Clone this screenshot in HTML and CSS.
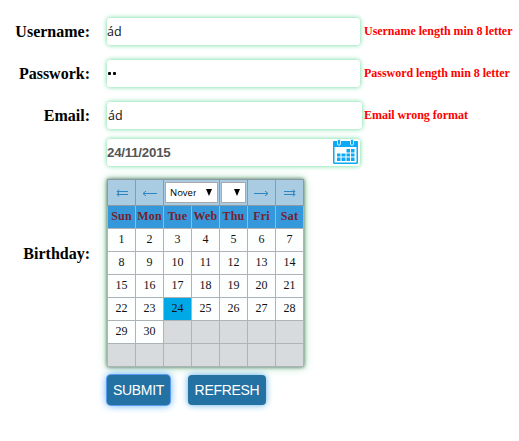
FILE: index.html
```
<!DOCTYPE html>
<html lang="en">
<head>
<meta charset="utf-8">
<title>Register</title>
<link rel="stylesheet" href="styles.css">
</head>
<body>
<form class="form">
  <div class="row">
    <div class="label">Username:</div>
    <div class="field">ád</div>
    <span class="error">Username length min 8 letter</span>
  </div>
  <div class="row">
    <div class="label">Passwork:</div>
    <div class="field password"><i></i><i></i></div>
    <span class="error">Password length min 8 letter</span>
  </div>
  <div class="row">
    <div class="label">Email:</div>
    <div class="field email">ád</div>
    <span class="error email-error">Email wrong format</span>
  </div>
  <div class="row birthday">
    <div class="label">Birthday:</div>
    <div class="picker">
      <div class="field date"><span>24/11/2015</span>
        <svg class="cal-icon" viewBox="0 0 25 25" width="25" height="25">
          <path fill="#0aaaf5" fill-rule="evenodd" d="M1 2H24Q25 2 25 3V23.500Q25 25 23.500 25H1.500Q0 25 0 23.500V3Q0 2 1 2ZM1.500 8V23.500H23.500V8Z"/>
          <path fill="#0aaaf5" stroke="#d8f1fe" d="M4.500 .5h3v5q-1.500 1.500-3 0ZM17.500 .5h3v5q-1.500 1.500-3 0Z"/>
          <path fill="#0aaaf5" d="M13.500 10h3.500v3.500h-3.500zM18 10h3.500v3.500h-3.500zM4 14.500h3.500v3h-3.500zM8.500 14.500h4v3h-4zM13.500 14.500h3.500v3h-3.500zM18 14.500h3.500v3h-3.500zM4 18.500h3.500v3.500h-3.500zM8.500 18.500h4v3.500h-4zM13.500 18.500h3.500v3.500h-3.500zM18 18.500h3.500v3.500h-3.500z"/>
        </svg>
      </div>
      <div class="calendar">
        <div class="nav"><svg width="12" height="8" viewBox="0 0 12 8"><path d="M1 2.500H12M3 .5L1 2.500L3 4M1 5.500H12M3 4L1 5.500L3 7.500"/></svg></div>
        <div class="nav"><svg width="15" height="10" viewBox="0 0 15 10"><path d="M1 5.500H15M4 3L1 5.500L4 8"/></svg></div>
        <div class="nav month"><div class="select"><span>Nover</span><b></b></div></div>
        <div class="nav"><div class="select year"><b></b></div></div>
        <div class="nav"><svg width="15" height="10" viewBox="0 0 15 10"><path d="M0 5.500H14M11 3L14 5.500L11 8"/></svg></div>
        <div class="nav"><svg width="12" height="8" viewBox="0 0 12 8"><path d="M0 2.500H11M9 .5L11 2.500L9 4M0 5.500H11M9 4L11 5.500L9 7.500"/></svg></div>
        <div class="dow">Sun</div><div class="dow">Mon</div><div class="dow">Tue</div><div class="dow">Web</div><div class="dow">Thu</div><div class="dow">Fri</div><div class="dow">Sat</div>
        <div class="day">1</div><div class="day">2</div><div class="day">3</div><div class="day">4</div><div class="day">5</div><div class="day">6</div><div class="day">7</div>
        <div class="day">8</div><div class="day">9</div><div class="day">10</div><div class="day">11</div><div class="day">12</div><div class="day">13</div><div class="day">14</div>
        <div class="day">15</div><div class="day">16</div><div class="day">17</div><div class="day">18</div><div class="day">19</div><div class="day">20</div><div class="day">21</div>
        <div class="day">22</div><div class="day">23</div><div class="day selected">24</div><div class="day">25</div><div class="day">26</div><div class="day">27</div><div class="day">28</div>
        <div class="day">29</div><div class="day">30</div><div class="day empty"></div><div class="day empty"></div><div class="day empty"></div><div class="day empty"></div><div class="day empty"></div>
        <div class="day empty"></div><div class="day empty"></div><div class="day empty"></div><div class="day empty"></div><div class="day empty"></div><div class="day empty"></div><div class="day empty"></div>
      </div>
    </div>
  </div>
  <div class="actions">
    <button type="button" class="btn submit">SUBMIT</button>
    <button type="button" class="btn refresh">REFRESH</button>
  </div>
</form>
</body>
</html>
```
FILE: styles.css
```
* { box-sizing: border-box; }
body {
  margin: 0;
  background: #fff;
  font-family: "Liberation Serif", serif;
}
.form { padding: 18px 0; }
.row {
  display: flex;
  align-items: center;
  height: 27px;
  margin-bottom: 15px;
}
.label {
  width: 90px;
  margin-right: 17px;
  text-align: right;
  font-size: 16px;
  font-weight: bold;
  line-height: 27px;
}
.field {
  display: flex;
  align-items: center;
  width: 253px;
  height: 27px;
  padding-bottom: 1px;
  border-radius: 3px;
  background: #fff;
  box-shadow: 0 0 5px #5fd694;
  font: 12.5px "Open Sans", sans-serif;
  color: #111;
}
.password { gap: 2px; padding: 0 0 0 1px; }
.password i { width: 3px; height: 3px; border-radius: 1px; background: #000; }
.email { width: 255px; padding-left: 1px; }
.error {
  margin-left: 4px;
  color: #f00;
  font-size: 12px;
  font-weight: bold;
  letter-spacing: -0.03px;
  white-space: nowrap;
}
.email-error { margin-left: 2px; }
.birthday {
  height: 228px;
  margin: -5px 0 8px;
}
.picker { align-self: flex-start; }
.date {
  justify-content: space-between;
  padding: 0 2px 0 0;
  margin-bottom: 13px;
  font: bold 13.33px "Liberation Sans", sans-serif;
  letter-spacing: -0.25px;
  color: #555;
}
.cal-icon { margin-top: -2px; }
.calendar {
  display: grid;
  grid-template-columns: repeat(7, 27px);
  grid-template-rows: 25px repeat(7, 22px);
  gap: 1px;
  width: 197px;
  padding: 1px;
  background: #adb4b7;
  box-shadow: 0 0 4px #456b50, 0 0 10px #b4e8c8;
}
.nav {
  display: flex;
  align-items: center;
  justify-content: center;
  background: #a9cce3;
  box-shadow: 0 0 0 1px #8c9ba3;
}
.nav svg { fill: none; stroke: #2e86c1; stroke-width: 1; }
.month { grid-column: span 2; }
.select {
  display: flex;
  align-items: center;
  justify-content: space-between;
  width: 53px;
  height: 21px;
  padding: 0 5px 0 4px;
  border: 1px solid #a9a9a9;
  background: #fff;
  font: 9.5px "Open Sans", sans-serif;
}
.select span { width: 26px; overflow: hidden; }
.select b {
  flex: none;
  border: 3.5px solid transparent;
  border-width: 7px 3.5px 0;
  border-top-color: #000;
}
.year { width: 25px; justify-content: flex-end; }
.dow {
  background: #3498db;
  color: #78202e;
  text-align: center;
  font-size: 12px;
  font-weight: bold;
  letter-spacing: 0.2px;
  line-height: 21px;
}
.day {
  background: #fdfefe;
  color: #111;
  text-align: center;
  font-size: 12px;
  line-height: 21px;
}
.empty { background: #d7dbdd; }
.selected { background: #00a9e6; }
.actions { display: flex; gap: 18px; padding-left: 107px; }
.btn {
  height: 30px;
  padding: 0;
  border: 0;
  border-radius: 4px;
  background: #2471a3;
  box-shadow: 0 0 7px #5dade2;
  color: #fff;
  font: 14px "Liberation Sans", sans-serif;
  letter-spacing: -0.3px;
}
.submit { width: 63px; box-shadow: 0 0 0 1px #5b9bf0, 0 0 8px #3fa0f0; }
.refresh { width: 78px; }
```
